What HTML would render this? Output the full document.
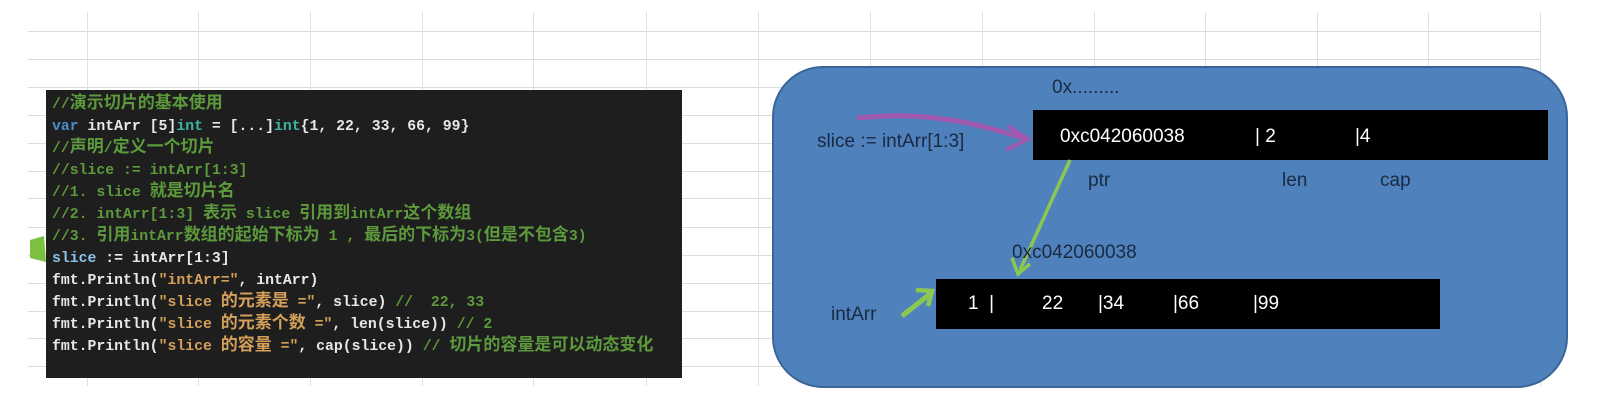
<!DOCTYPE html>
<html><head><meta charset="utf-8"><style>
body{margin:0;width:1606px;height:420px;background:#fff;position:relative;overflow:hidden;font-family:"Liberation Sans","Noto Sans CJK SC",sans-serif}
.vl{position:absolute;top:12px;height:374px;width:1px;background:#e0e0e0}
.hl{position:absolute;left:28px;width:1512px;height:1px;background:#dcdcdc}
#code{position:absolute;left:46px;top:90px;width:636px;height:288px;background:#1e1e1e;font-family:"Liberation Mono","Noto Sans CJK SC",monospace;font-size:14.8px;font-weight:bold;color:#e8e8e8}
#code div{position:absolute;left:6px;white-space:pre;line-height:22px;height:22px}
#code i{font-style:normal;font-size:17px;line-height:22px}
.c{color:#5c9a3c}.k{color:#4a8cc8}.t{color:#3fb3a3}.s{color:#d4a05a}.b{color:#8cc4ea}
.w{position:absolute;color:#fff;font-size:19px;white-space:pre;line-height:22px}
.d{position:absolute;color:#1a2a40;font-size:19px;white-space:pre;line-height:22px}
</style></head><body>
<div class="hl" style="top:31px"></div><div class="hl" style="top:59px"></div><div class="hl" style="top:87px"></div><div class="hl" style="top:115px"></div><div class="hl" style="top:143px"></div><div class="hl" style="top:171px"></div><div class="hl" style="top:198px"></div><div class="hl" style="top:227px"></div><div class="hl" style="top:255px"></div><div class="hl" style="top:283px"></div><div class="hl" style="top:311px"></div><div class="hl" style="top:338px"></div><div class="hl" style="top:366px"></div>
<div class="vl" style="left:87px"></div><div class="vl" style="left:198px"></div><div class="vl" style="left:310px"></div><div class="vl" style="left:422px"></div><div class="vl" style="left:533px"></div><div class="vl" style="left:646px"></div><div class="vl" style="left:758px"></div><div class="vl" style="left:870px"></div><div class="vl" style="left:982px"></div><div class="vl" style="left:1094px"></div><div class="vl" style="left:1205px"></div><div class="vl" style="left:1317px"></div><div class="vl" style="left:1428px"></div><div class="vl" style="left:1540px"></div>
<div id="code">
<div style="top:4px" class="c">//<i>演示切片的基本使用</i></div>
<div style="top:26px"><span class="k">var</span> intArr [5]<span class="t">int</span> = [...]<span class="t">int</span>{1, 22, 33, 66, 99}</div>
<div style="top:48px" class="c">//<i>声明</i>/<i>定义一个切片</i></div>
<div style="top:70px" class="c">//slice := intArr[1:3]</div>
<div style="top:92px" class="c">//1. slice <i>就是切片名</i></div>
<div style="top:114px" class="c">//2. intArr[1:3] <i>表示</i> slice <i>引用到</i>intArr<i>这个数组</i></div>
<div style="top:136px" class="c">//3. <i>引用</i>intArr<i>数组的起始下标为</i> 1 , <i>最后的下标为</i>3(<i>但是不包含</i>3)</div>
<div style="top:158px"><span class="b">slice</span> := intArr[1:3]</div>
<div style="top:180px">fmt.Println(<span class="s">"intArr="</span>, intArr)</div>
<div style="top:202px">fmt.Println(<span class="s">"slice <i>的元素是</i> ="</span>, slice) <span class="c">//  22, 33</span></div>
<div style="top:224px">fmt.Println(<span class="s">"slice <i>的元素个数</i> ="</span>, len(slice)) <span class="c">// 2</span></div>
<div style="top:246px">fmt.Println(<span class="s">"slice <i>的容量</i> ="</span>, cap(slice)) <span class="c">// <i>切片的容量是可以动态变化</i></span></div>
</div>
<svg style="position:absolute;left:0;top:0" width="1606" height="420">
<path d="M30 240 L44 236 L46 262 L30 258Z" fill="#7cc040"/>
<rect x="773" y="67" width="794" height="320" rx="50" fill="#4f81bd" stroke="#3b6598" stroke-width="2"/>
<rect x="1033" y="110" width="515" height="50" fill="#000"/>
<rect x="936" y="279" width="504" height="50" fill="#000"/>
<path d="M857 118 C930 110 980 125 1024 138" stroke="#a25ab0" stroke-width="5" fill="none"/>
<path d="M1008 126 L1028 139 L1006 150" stroke="#a25ab0" stroke-width="4" fill="none"/>
<path d="M1070 160 L1020 270" stroke="#8cc850" stroke-width="3.5"/>
<path d="M1012 258 L1018 274 L1030 264" stroke="#8cc850" stroke-width="3.5" fill="none"/>
<path d="M902 316 L930 294" stroke="#8cc850" stroke-width="5"/>
<path d="M916 290 L932 291 L928 306" stroke="#8cc850" stroke-width="4.5" fill="none"/>
</svg>
<div class="d" style="left:1052px;top:77px">0x.........</div>
<div class="d" style="left:817px;top:131px">slice := intArr[1:3]</div>
<div class="w" style="left:1060px;top:126px">0xc042060038</div>
<div class="w" style="left:1255px;top:126px">| 2</div>
<div class="w" style="left:1355px;top:126px">|4</div>
<div class="d" style="left:1088px;top:170px">ptr</div>
<div class="d" style="left:1282px;top:170px">len</div>
<div class="d" style="left:1380px;top:170px">cap</div>
<div class="d" style="left:1012px;top:242px">0xc042060038</div>
<div class="d" style="left:831px;top:304px">intArr</div>
<div class="w" style="left:968px;top:293px">1  |</div>
<div class="w" style="left:1042px;top:293px">22</div>
<div class="w" style="left:1098px;top:293px">|34</div>
<div class="w" style="left:1173px;top:293px">|66</div>
<div class="w" style="left:1253px;top:293px">|99</div>
</body></html>
